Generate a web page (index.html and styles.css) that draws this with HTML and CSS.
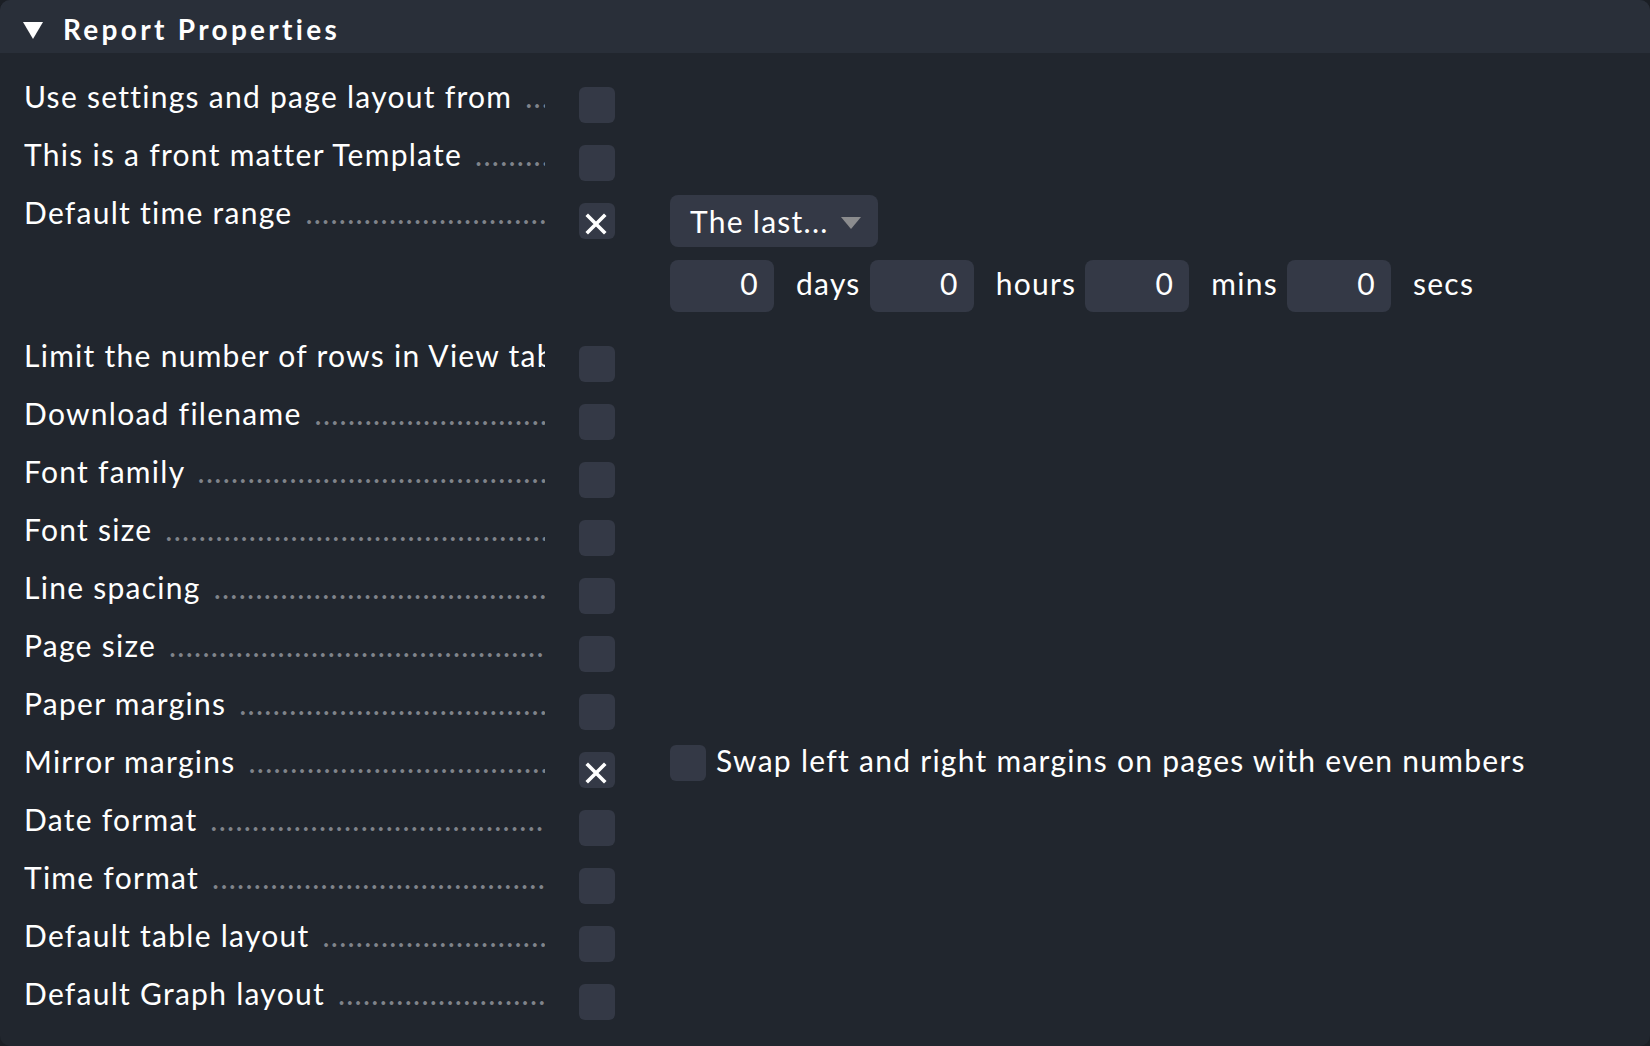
FILE: index.html
```html
<!DOCTYPE html>
<html>
<head>
<meta charset="utf-8">
<link rel="stylesheet" href="styles.css">
</head>
<body>
<div class="panel">
  <div class="header">
    <svg class="tri" width="20" height="17" viewBox="0 0 20 17"><polygon points="0,0 20,0 10,17" fill="#ffffff"/></svg>
    <span class="title">Report Properties</span>
  </div>
  <div class="body">
    <div class="row">
      <div class="label">Use settings and page layout from <span class="dots">........................................................................</span></div>
      <div class="cb"></div>
    </div>
    <div class="row">
      <div class="label">This is a front matter Template <span class="dots">........................................................................</span></div>
      <div class="cb"></div>
    </div>
    <div class="row row-tall">
      <div class="label">Default time range <span class="dots">........................................................................</span></div>
      <div class="cb checked"><svg class="x" width="22" height="22" viewBox="0 0 22 22"><path d="M3 3 L19 19 M19 3 L3 19" stroke="#ffffff" stroke-width="3.6" stroke-linecap="square"/></svg></div>
      <div class="content timerange">
        <div class="select">The last...<svg class="arrow" width="20" height="12" viewBox="0 0 20 12"><polygon points="0,0 20,0 10,12" fill="#8b8c8e"/></svg></div>
        <div class="age">
          <div class="num">0</div><span class="unit">days</span>
          <div class="num">0</div><span class="unit">hours</span>
          <div class="num">0</div><span class="unit">mins</span>
          <div class="num">0</div><span class="unit">secs</span>
        </div>
      </div>
    </div>
    <div class="row">
      <div class="label">Limit the number of rows in View tables <span class="dots">........................................................................</span></div>
      <div class="cb"></div>
    </div>
    <div class="row">
      <div class="label">Download filename <span class="dots">........................................................................</span></div>
      <div class="cb"></div>
    </div>
    <div class="row">
      <div class="label">Font family <span class="dots">........................................................................</span></div>
      <div class="cb"></div>
    </div>
    <div class="row">
      <div class="label">Font size <span class="dots">........................................................................</span></div>
      <div class="cb"></div>
    </div>
    <div class="row">
      <div class="label">Line spacing <span class="dots">........................................................................</span></div>
      <div class="cb"></div>
    </div>
    <div class="row">
      <div class="label">Page size <span class="dots">........................................................................</span></div>
      <div class="cb"></div>
    </div>
    <div class="row">
      <div class="label">Paper margins <span class="dots">........................................................................</span></div>
      <div class="cb"></div>
    </div>
    <div class="row">
      <div class="label">Mirror margins <span class="dots">........................................................................</span></div>
      <div class="cb checked"><svg class="x" width="22" height="22" viewBox="0 0 22 22"><path d="M3 3 L19 19 M19 3 L3 19" stroke="#ffffff" stroke-width="3.6" stroke-linecap="square"/></svg></div>
      <div class="content mirror">
        <div class="cb inner"></div>
        <span class="mtext">Swap left and right margins on pages with even numbers</span>
      </div>
    </div>
    <div class="row">
      <div class="label">Date format <span class="dots">........................................................................</span></div>
      <div class="cb"></div>
    </div>
    <div class="row">
      <div class="label">Time format <span class="dots">........................................................................</span></div>
      <div class="cb"></div>
    </div>
    <div class="row">
      <div class="label">Default table layout <span class="dots">........................................................................</span></div>
      <div class="cb"></div>
    </div>
    <div class="row">
      <div class="label">Default Graph layout <span class="dots">........................................................................</span></div>
      <div class="cb"></div>
    </div>
  </div>
</div>
</body>
</html>
```

FILE: styles.css
```css
html, body {
  margin: 0;
  padding: 0;
  background: #1b1f25;
}
body {
  font-family: Lato, "Noto Sans", sans-serif;
  color: #ffffff;
  font-variant-ligatures: none;
}
.panel {
  width: 1650px;
  height: 1046px;
  background: #21262e;
  border-radius: 10px;
  overflow: hidden;
}
.header {
  height: 53px;
  background: #292f39;
  display: flex;
  align-items: center;
  padding-left: 23px;
}
.tri {
  display: block;
  margin-top: 8px;
}
.title {
  margin-left: 20px;
  margin-top: 4px;
  font-size: 28px;
  font-weight: 700;
  letter-spacing: 3.3px;
}
.body {
  padding-top: 26px;
  padding-left: 24px;
}
.row {
  display: flex;
  align-items: flex-start;
  height: 58px;
}
.row-tall {
  height: 143px;
}
.label {
  width: 521px;
  overflow: hidden;
  white-space: nowrap;
  font-size: 30px;
  line-height: 36px;
  letter-spacing: 1.27px;
  margin-top: -1px;
}
.dots {
  color: #80848b;
  margin-left: 4px;
}
.cb {
  width: 36px;
  height: 36px;
  border-radius: 6px;
  background: #343946;
  margin-left: 34px;
  margin-top: 8px;
  flex: none;
  display: flex;
  align-items: center;
  justify-content: center;
}
.cb .x {
  display: block;
  margin-top: 5px;
  margin-left: -2px;
}
.content {
  margin-left: 55px;
}
.timerange {
  display: flex;
  flex-direction: column;
  gap: 13px;
}
.select {
  width: 208px;
  height: 52px;
  box-sizing: border-box;
  border-radius: 8px;
  background: #343946;
  display: flex;
  align-items: center;
  padding-left: 20px;
  font-size: 30px;
  letter-spacing: 1.27px;
  line-height: 50px;
}
.arrow {
  display: block;
  margin-left: 12px;
  margin-top: 4px;
}
.age {
  display: flex;
  align-items: flex-start;
  font-size: 30px;
  letter-spacing: 1.27px;
  line-height: 47px;
}
.num {
  width: 104px;
  height: 52px;
  box-sizing: border-box;
  border-radius: 8px;
  background: #343946;
  text-align: right;
  padding-right: 15px;
}
.unit {
  padding-left: 22px;
  padding-right: 9px;
}
.mirror {
  display: flex;
  align-items: flex-start;
}
.cb.inner {
  margin-left: 0;
  margin-top: 1px;
}
.mtext {
  margin-left: 10px;
  font-size: 30px;
  line-height: 36px;
  letter-spacing: 1.27px;
  margin-top: -2px;
}
```
